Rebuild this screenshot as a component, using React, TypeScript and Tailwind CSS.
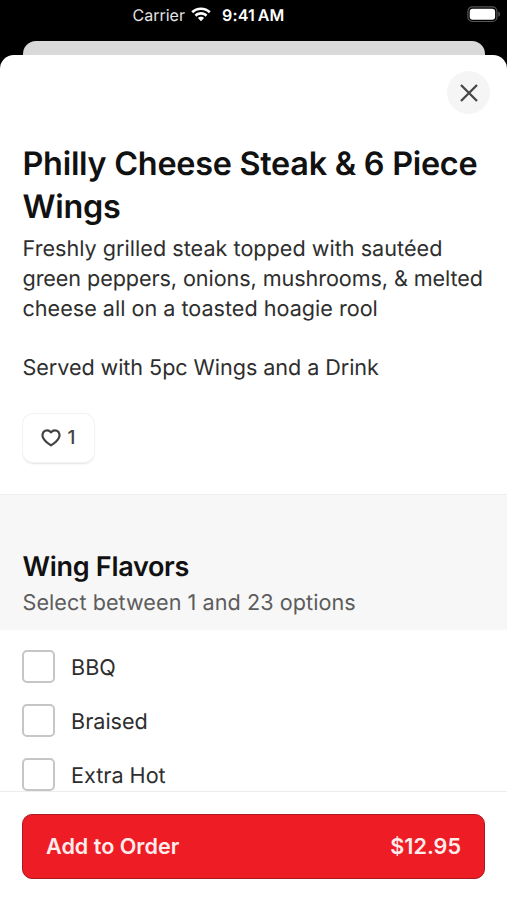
const flavors = ["BBQ", "Braised", "Extra Hot"];

function StatusBar() {
  return (
    <div className="flex h-[41px] shrink-0 items-start text-white">
      <div className="ml-[132.5px] mt-[5px] flex h-5 items-center text-[16px] leading-5">
        <span className="w-[52px] whitespace-nowrap text-[#e4e4e4]">Carrier</span>
        <svg className="ml-[6px] mt-[-1px] h-[15px] w-5" viewBox="0 0 20 15" fill="white">
          <path d="M10 .4C6.2.4 2.800 1.900.3 4.300L2.200 6.300C4.200 4.300 6.900 3.100 10 3.100s5.800 1.200 7.800 3.200l1.900-2C17.200 1.900 13.800.4 10 .4Z" />
          <path d="M10 5.100c-2.500 0-4.700 1-6.400 2.600l1.900 2C6.700 8.500 8.200 7.800 10 7.800s3.300.7 4.500 1.900l1.900-2C14.700 6.100 12.500 5.100 10 5.100Z" />
          <path d="M10 9.700c-1.200 0-2.300.5-3.100 1.300L10 14.200l3.100-3.200c-.8-.8-1.900-1.300-3.100-1.300Z" />
        </svg>
        <span className="ml-[11.500px] whitespace-nowrap font-semibold tracking-[0.2px] [word-spacing:-1.500px]">9:41 AM</span>
      </div>
      <svg className="ml-auto mr-[6px] mt-[6px] h-[17px] w-[34px]" viewBox="0 0 34 17">
        <rect x="0.900" y="0.900" width="29" height="14.600" rx="4.500" fill="none" stroke="#565656" strokeWidth="1.200" />
        <rect x="2.700" y="2.700" width="25.400" height="11" rx="3" fill="white" />
        <path d="M31.300 5.600v5.200c1-.4 1.700-1.400 1.700-2.600s-.7-2.200-1.700-2.600Z" fill="#565656" />
      </svg>
    </div>
  );
}

export default function App() {
  return (
    <div className="flex h-[900px] w-[507px] flex-col overflow-hidden bg-black font-['Inter',sans-serif] text-[#2e2e2e] [text-rendering:geometricPrecision]">
      <StatusBar />
      <div className="mx-[22.500px] h-[14px] shrink-0 rounded-t-[13px] bg-[#d9d9d9]" />
      <main className="flex min-h-0 flex-1 flex-col overflow-hidden rounded-t-[14px] bg-white">
        <div className="flex h-[87px] shrink-0 justify-end pr-[17px] pt-4">
          <button aria-label="Close" className="flex size-[43px] items-center justify-center rounded-full bg-[#f5f5f5]">
            <svg className="size-[18px]" viewBox="0 0 18 18" fill="none" stroke="#464646" strokeWidth="2.300">
              <path d="M1 1l16 16M17 1L1 17" />
            </svg>
          </button>
        </div>
        <section className="flex h-[352px] shrink-0 flex-col items-start px-[22.500px]">
          <h1 className="whitespace-nowrap text-[32.400px] font-semibold leading-[43.200px] tracking-[-0.270px] text-[#111111]">
            Philly Cheese Steak &amp; 6 Piece<br />Wings
          </h1>
          <p className="mt-[7px] whitespace-nowrap text-[21.600px] leading-[29.600px]">
            <span className="tracking-[0.020px]">Freshly grilled steak topped with sautéed</span><br />
            <span className="tracking-[-0.080px]">green peppers, onions, mushrooms, &amp; melted</span><br />
            cheese all on a toasted hoagie rool<br /><br />
            <span className="tracking-[-0.060px]">Served with 5pc Wings and a Drink</span>
          </p>
          <button className="mt-[30.500px] flex h-[48px] w-[71px] items-center justify-center gap-[7px] rounded-[10px] bg-white text-[18.900px] font-medium leading-none text-[#424242] shadow-[0_0_0_1px_#f3f3f3,0_1.500px_2px_0px_#e2e2e2]">
            <svg className="h-[18px] w-5" viewBox="0 0 21 19" fill="none" stroke="#424242" strokeWidth="2.300" strokeLinejoin="round">
              <path d="M10.500 3.500C8.900 1.500 6.500.9 4.300 1.900 1.400 3.200.8 7 2.400 9.700c1.500 2.800 4.800 5.400 8.100 7.600 3.300-2.200 6.600-4.800 8.100-7.600 1.600-2.700 1-6.500-1.900-7.800-2.200-1-4.600-.4-6.200 1.600Z" />
            </svg>
            <span className="pt-0.5">1</span>
          </button>
        </section>
        <section className="h-[136px] shrink-0 border-t border-[#ededed] bg-[#f7f7f7] px-[22.500px] pt-[54px]">
          <h2 className="whitespace-nowrap text-[27px] font-semibold leading-[36px] tracking-[-0.300px] text-[#111111]">Wing Flavors</h2>
          <p className="mt-[3px] whitespace-nowrap text-[21.600px] leading-[30px] tracking-[0.060px] text-[#5c5c5c]">Select between 1 and 23 options</p>
        </section>
        <div className="flex h-[161px] shrink-0 flex-col gap-[21px] overflow-hidden px-[22px] pt-5">
          {flavors.map((flavor) => (
            <label key={flavor} className="flex h-[33px] shrink-0 items-center gap-4 text-[21.600px] leading-[30px]">
              <span className="size-[33px] rounded-[5px] border-2 border-[#c6c6c6] bg-white" />
              <span className="pt-0.5">{flavor}</span>
            </label>
          ))}
        </div>
        <footer className="flex-1 border-t border-[#ededed] bg-white px-[22px] pt-[22px]">
          <button className="flex h-[65px] w-full items-center justify-between rounded-[10px] border border-[#a9191f] bg-[#ee1c25] px-[23px] pb-px text-[21.600px] font-semibold leading-[30px] text-[#ffecec]">
            <span>Add to Order</span>
            <span>$12.95</span>
          </button>
        </footer>
      </main>
    </div>
  );
}
